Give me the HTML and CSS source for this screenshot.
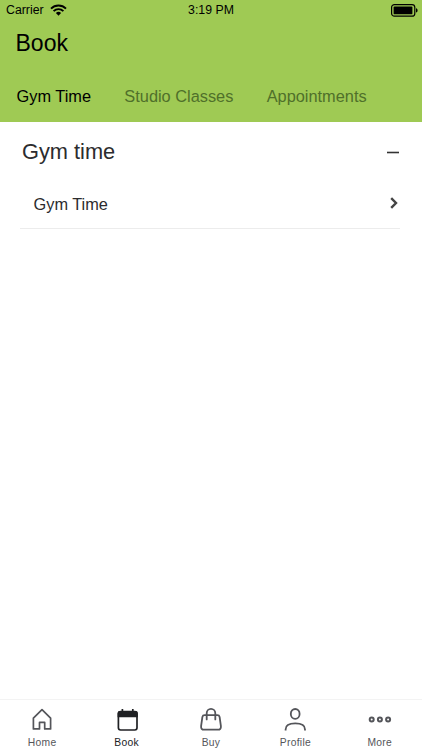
FILE: index.html
```html
<!DOCTYPE html>
<html lang="en">
<head>
    <meta charset="UTF-8">
    <meta name="viewport" content="width=device-width, initial-scale=1.0">
    <title>Book</title>
    <link rel="stylesheet" href="styles.css">
</head>
<body>
    <div class="app">
        <header class="header">
            <div class="status-bar">
                <div class="carrier">
                    <span>Carrier</span>
                    <svg width="17" height="12" viewBox="0 0 17 12" fill="none" stroke="#000" stroke-width="1.9">
                        <path d="M1 4.6a10.6 10.6 0 0 1 15 0M3.6 7.2a6.9 6.9 0 0 1 9.8 0"/>
                        <path d="M8.5 11.7L5.9 9.1a3.7 3.7 0 0 1 5.2 0z" fill="#000" stroke="none"/>
                    </svg>
                </div>
                <span class="time">3:19 PM</span>
                <svg class="battery" width="28" height="13" viewBox="0 0 28 13">
                    <rect x="1.6" y="0.6" width="23.2" height="11.6" rx="2.8" fill="none" stroke="#000" stroke-width="1.2"/>
                    <rect x="3.6" y="2.5" width="18.8" height="7.8" rx="0.9"/>
                    <path d="M26 4.3c1 .4 1.6 1.1 1.6 2.1s-.6 1.7-1.6 2.1z"/>
                </svg>
            </div>
            <h1>Book</h1>
            <nav class="tabs">
                <a class="tab active">Gym Time</a>
                <a class="tab">Studio Classes</a>
                <a class="tab">Appointments</a>
            </nav>
        </header>

        <main class="content">
            <div class="section-title">
                <h2>Gym time</h2>
                <svg width="12" height="12" viewBox="0 0 12 12" stroke="#333" stroke-width="1.6">
                    <path d="M0 6.5h12"/>
                </svg>
            </div>
            <div class="list-item">
                <span>Gym Time</span>
                <svg width="8" height="16" viewBox="0 0 8 16" fill="none" stroke="#444" stroke-width="2.4">
                    <path d="M1.2 1.2L6 6l-4.8 4.8"/>
                </svg>
            </div>
        </main>

        <nav class="tab-bar">
            <a class="nav-item">
                <svg width="24" height="24" viewBox="0 0 24 24" fill="none" stroke="#54555a" stroke-width="1.7" stroke-linejoin="round">
                    <path d="M3.4 10.1L12 1.7l8.6 8.4v10.8h-5.9v-6.5H9.5v6.5H3.4z"/>
                </svg>
                <span>Home</span>
            </a>
            <a class="nav-item active">
                <svg width="24" height="24" viewBox="0 0 24 24" fill="none" stroke="#202124" stroke-width="1.7">
                    <rect x="3.4" y="3.5" width="18.6" height="18.5" rx="2.2"/>
                    <path d="M2.6 9.3V5.3a2.4 2.4 0 0 1 2.4-2.4h15.4a2.4 2.4 0 0 1 2.4 2.4v4z" fill="#202124" stroke="none"/>
                    <path d="M7.4 4V1M17.8 4V1"/>
                </svg>
                <span>Book</span>
            </a>
            <a class="nav-item">
                <svg width="24" height="24" viewBox="0 0 24 24" fill="none" stroke="#54555a" stroke-width="1.8" stroke-linecap="round" stroke-linejoin="round">
                    <path d="M5.6 7.2h12.8q1.8 0 2.2 1.7l1.3 9.2q.3 3.6-3 3.6H5.1q-3.3 0-3-3.6l1.3-9.2q.4-1.7 2.2-1.7z"/>
                    <path d="M7.7 11.4V5.2a4.3 4.3 0 0 1 8.6 0v6.2"/>
                </svg>
                <span>Buy</span>
            </a>
            <a class="nav-item">
                <svg width="24" height="24" viewBox="0 0 24 24" fill="none" stroke="#54555a" stroke-width="1.8">
                    <ellipse cx="12.2" cy="5.9" rx="4.4" ry="4.9"/>
                    <path d="M2.6 22.6v-1.2c0-4 3.2-6 9.7-6s9.7 2 9.7 6v1.2"/>
                </svg>
                <span>Profile</span>
            </a>
            <a class="nav-item">
                <svg width="24" height="24" viewBox="0 0 24 24" fill="none" stroke="#54555a" stroke-width="2">
                    <circle cx="3.7" cy="11.6" r="2"/>
                    <circle cx="11.9" cy="11.6" r="2"/>
                    <circle cx="20.1" cy="11.6" r="2"/>
                </svg>
                <span>More</span>
            </a>
        </nav>
    </div>
</body>
</html>
```
FILE: styles.css
```css
:root {
    --primary-color: #9fca54;
    --text-color: #2c2c2e;
    --muted-color: #54555a;
    --border-color: #ececec;
}

* {
    margin: 0;
    padding: 0;
    box-sizing: border-box;
}

body {
    font-family: "Liberation Sans", Arial, sans-serif;
    color: var(--text-color);
    background-color: #fff;
}

svg {
    display: block;
    flex-shrink: 0;
}

.app {
    display: flex;
    flex-direction: column;
    height: 100vh;
}

.header {
    height: 122px;
    background-color: var(--primary-color);
    color: #000;
}

.status-bar {
    display: grid;
    grid-template-columns: 1fr auto 1fr;
    align-items: center;
    height: 20px;
    padding: 0 4px;
    font-size: 12.3px;
}

.carrier {
    display: flex;
    align-items: center;
    gap: 6px;
    padding-left: 2px;
}

.time {
    padding-bottom: 1px;
}

.battery {
    justify-self: end;
}

.header h1 {
    margin-top: 8px;
    padding-left: 15.5px;
    font-size: 23px;
    font-weight: normal;
    line-height: 30px;
}

.tabs {
    display: flex;
    gap: 33.3px;
    margin-top: 26px;
    padding-left: 16.6px;
    font-size: 16.35px;
    line-height: 24px;
}

.tab {
    color: #4f702a;
    white-space: nowrap;
}

.tab.active {
    color: #000;
}

.content {
    flex: 1;
}

.section-title {
    display: flex;
    align-items: center;
    justify-content: space-between;
    height: 60px;
    padding: 0 23px 0 22px;
}

.section-title h2 {
    font-size: 21.8px;
    font-weight: normal;
}

.list-item {
    display: flex;
    align-items: center;
    justify-content: space-between;
    height: 47px;
    margin: 0 22px 0 20px;
    padding: 0 2px 1px 13.5px;
    border-bottom: 1px solid var(--border-color);
    font-size: 16.35px;
}

.tab-bar {
    display: grid;
    grid-template-columns: repeat(5, 1fr);
    height: 51px;
    border-top: 1px solid #f3f3f3;
}

.nav-item {
    display: flex;
    flex-direction: column;
    align-items: center;
    padding-top: 8px;
    color: var(--muted-color);
    font-size: 10.3px;
    line-height: 12px;
    letter-spacing: 0.3px;
}

.nav-item span {
    margin-top: 5px;
}

.nav-item.active {
    color: #202124;
}
```
